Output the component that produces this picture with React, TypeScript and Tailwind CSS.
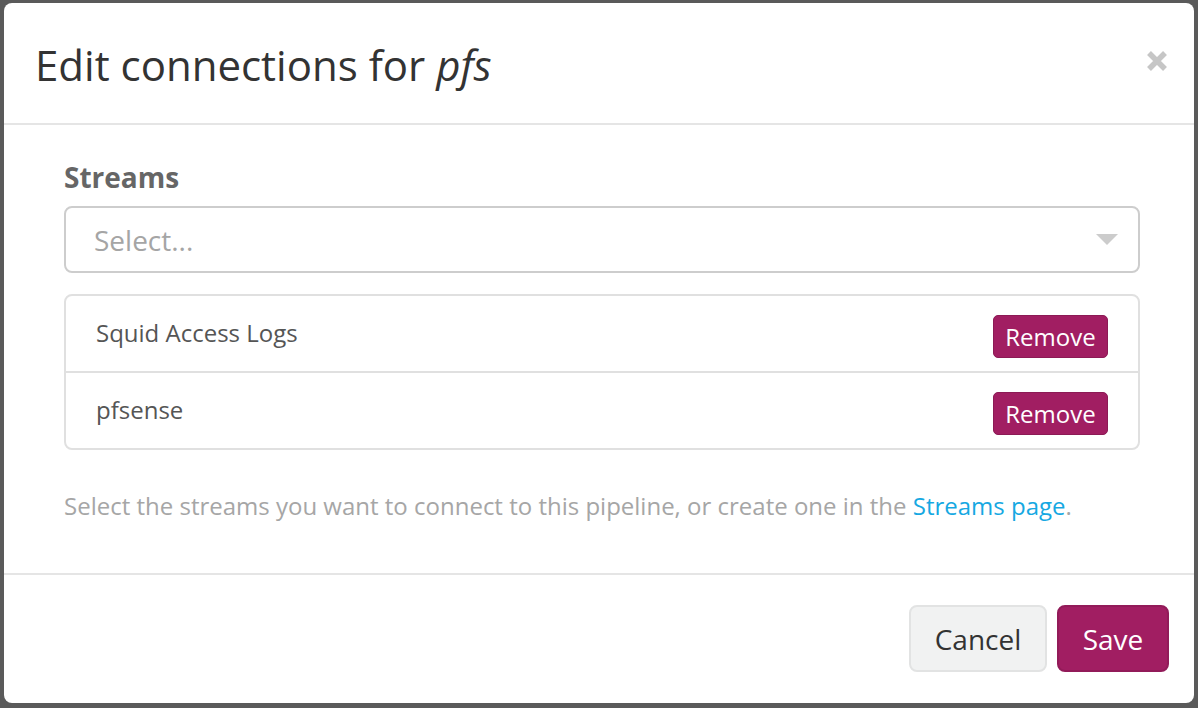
import React from "react";

export default function App() {
  const font = { fontFamily: '"Open Sans", "Noto Sans", sans-serif' };
  return (
    <div className="w-[1198px] h-[708px] bg-[#5a5a5a] pt-[3px] px-[4px] overflow-hidden" style={font}>
      <div className="bg-white rounded-[8px] h-[700px] flex flex-col">
        {/* Header */}
        <div className="h-[122px] border-b-2 border-[#e5e5e5] flex items-center justify-between pl-[31px] pr-[26px] shrink-0">
          <h4 className="text-[42px] leading-[56px] text-[#333] mt-[4px]">
            Edit connections for <em className="italic">pfs</em>
          </h4>
          <svg width="22" height="22" viewBox="0 0 22 22" className="mb-[4px]">
            <path d="M3 3 L19 19 M19 3 L3 19" stroke="#c6c6c6" strokeWidth="5.5" strokeLinecap="butt" />
          </svg>
        </div>

        {/* Body */}
        <div className="pl-[60px] pr-[54px] pt-[32px] flex flex-col">
          <label className="text-[28px] leading-[40px] font-bold text-[#666]">Streams</label>
          <div className="mt-[9px] h-[67px] border-2 border-[#cdcdcd] rounded-[8px] flex items-center justify-between pl-[28px] pr-[20px]">
            <span className="text-[28px] text-[#a5a5a5]">Select...</span>
            <svg width="22" height="12" viewBox="0 0 22 12">
              <path d="M0 0 L22 0 L11 11 Z" fill="#cccccc" />
            </svg>
          </div>

          <div className="mt-[21px] border-2 border-[#e0e0e0] rounded-[8px] flex flex-col">
            {["Squid Access Logs", "pfsense"].map((name, i) => (
              <div
                key={name}
                className={
                  "h-[75px] flex items-center justify-between pl-[30px] pr-[30px] " +
                  (i === 0 ? "border-b-2 border-[#e0e0e0] h-[77px]" : "")
                }
              >
                <span className="text-[24px] text-[#555] -mt-[2px]">{name}</span>
                <button className="mt-[6px] h-[43px] w-[115px] rounded-[5px] bg-[#a11e62] border border-[#8c1a55] text-white text-[24px] leading-none">
                  Remove
                </button>
              </div>
            ))}
          </div>

          <p className="mt-[38px] text-[24px] leading-[36px] text-[#a6a6a6]">
            Select the streams you want to connect to this pipeline, or create one in the{" "}
            <span className="text-[#16a8e2]">Streams page</span>.
          </p>
        </div>

        {/* Footer */}
        <div className="mt-auto border-t-2 border-[#e5e5e5] h-[130px] flex items-start justify-end gap-[10px] pt-[30px] pr-[25px]">
          <button className="h-[67px] w-[138px] rounded-[8px] bg-[#f1f2f2] border-2 border-[#e2e3e3] text-[#333] text-[28px]">
            Cancel
          </button>
          <button className="h-[67px] w-[112px] rounded-[8px] bg-[#a11e62] border-2 border-[#921b59] text-white text-[28px]">
            Save
          </button>
        </div>
      </div>
    </div>
  );
}
